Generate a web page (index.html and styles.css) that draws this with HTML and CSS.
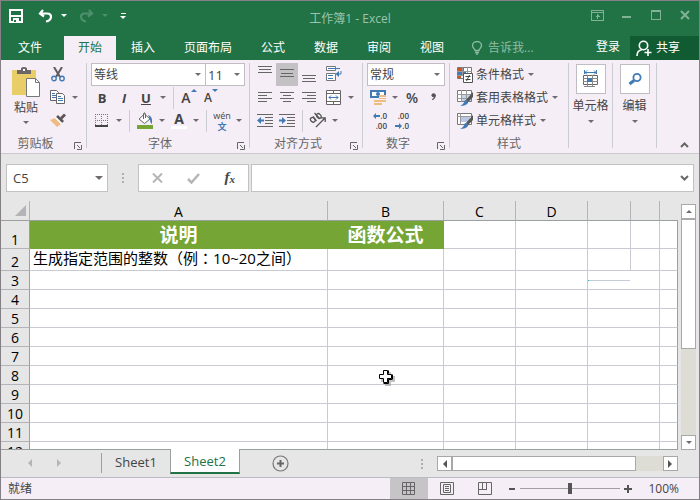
FILE: index.html
```html
<!DOCTYPE html>
<html lang="zh-CN">
<head>
  <meta charset="UTF-8" />
  <meta name="viewport" content="width=device-width, initial-scale=1.0"/>
  <title>工作簿1 - Excel</title>
  <link rel="stylesheet" href="styles.css">
</head>
<body>
<div class="window">

  <header class="titlebar">
    <div class="quick">
      <button class="quick-btn" aria-label="保存"><svg width="14" height="14" viewBox="0 0 14 14" shape-rendering="crispEdges"><path d="M1 1h12v12H1zM2 7h10" fill="none" stroke="#fff" stroke-width="2"/><path d="M4 9h6v4H4z" fill="#fff"/><path d="M5 11h2v2H5z" fill="#217346"/></svg></button>
      <button class="quick-btn" aria-label="撤消"><svg width="15" height="14" viewBox="0 0 15 14"><path d="M5 1L2 4.500l4 3M2 4.500h7c6 0 5 7-1 8" fill="none" stroke="#fff" stroke-width="2.200"/></svg></button>
      <button class="quick-drop" aria-label="撤消列表"><i class="caret"></i></button>
      <button class="quick-btn faded" aria-label="恢复"><svg width="15" height="14" viewBox="0 0 15 14"><path d="M10 1l3 3.500-4 3M13 4.500H6c-6 0-5 7 1 8" fill="none" stroke="#fff" stroke-width="2.200"/></svg></button>
      <button class="quick-drop faded" aria-label="恢复列表"><i class="caret"></i></button>
      <button class="quick-drop more" aria-label="自定义"><i class="caret"></i></button>
    </div>
    <h1>工作簿1 - Excel</h1>
    <div class="controls">
      <button aria-label="功能区显示选项"><svg width="13" height="11" viewBox="0 0 13 11" shape-rendering="crispEdges"><path d="M.5.5h12v10H.5zM1 2.500h11M6.500 4v5M4.500 6.500h4M5.500 5.500h2" fill="none" stroke="currentColor"/></svg></button>
      <button aria-label="最小化"><svg width="10" height="10"><path d="M0 6h9v2H0z" fill="currentColor"/></svg></button>
      <button aria-label="最大化"><svg width="10" height="10" shape-rendering="crispEdges"><path d="M.5.5h9v9h-9zM0 1.500h10" fill="none" stroke="currentColor"/></svg></button>
      <button aria-label="关闭"><svg width="10" height="10"><path d="M1 1l8 8M9 1L1 9" stroke="currentColor" stroke-width="2"/></svg></button>
    </div>
  </header>

  <nav class="tabs">
    <button class="tab file">文件</button>
    <button class="tab active">开始</button>
    <button class="tab">插入</button>
    <button class="tab">页面布局</button>
    <button class="tab">公式</button>
    <button class="tab">数据</button>
    <button class="tab">审阅</button>
    <button class="tab">视图</button>
    <button class="tab tell"><svg width="12" height="14" viewBox="0 0 12 14"><path d="M4 9.500C4 8 1.500 7 1.500 4.500a4.500 4 0 0 1 9 0C10.500 7 8 8 8 9.500zM4 11.500h4M5 13.200h2" fill="none" stroke="currentColor" stroke-width="1.300"/></svg>告诉我...</button>
    <a class="login" href="#">登录</a>
    <button class="share"><svg width="16" height="17" viewBox="0 0 16 17"><circle cx="7.500" cy="5.500" r="4.200" fill="none" stroke="#fff" stroke-width="1.600"/><path d="M1 16c0-4 2-6 5-6.300M8.500 12.500h7M12 9v7" fill="none" stroke="#fff" stroke-width="1.600"/></svg>共享</button>
  </nav>

  <section class="ribbon">
    <div class="group clipboard">
      <div class="body side">
        <button class="paste">
          <svg width="28" height="31" viewBox="0 0 28 31"><path d="M0 3h24v25H0z" fill="#e8cd68"/><path d="M5 7V3h4V1q3-2 6 0v2h4v4z" fill="#6c6668"/><path d="M11 2h2v2h-2z" fill="#fff"/><path d="M14.500 11.500h9l4 4v14h-13z" fill="#fff" stroke="#777"/><path d="M23.500 11.500v4h4" fill="none" stroke="#777"/></svg>
          <span>粘贴</span>
          <i class="caret"></i>
        </button>
        <div>
          <div class="row"><button class="tool" aria-label="剪切"><svg width="14" height="15" viewBox="0 0 14 15"><path d="M3 0l6 10M11 0L5 10" stroke="#5f5a5e" stroke-width="2"/><circle cx="3" cy="11.500" r="2.200" fill="none" stroke="#3f7ab5" stroke-width="1.400"/><circle cx="11" cy="11.500" r="2.200" fill="none" stroke="#3f7ab5" stroke-width="1.400"/></svg></button></div>
          <div class="row"><button class="tool" aria-label="复制"><svg width="16" height="15"><path d="M.5.5h6l2 2v8h-8z" fill="#fff" stroke="#666"/><path d="M2 3.500h3M2 5.500h4M2 7.500h4" stroke="#3f7ab5"/><path d="M6.500 3.500h6l2 2v8h-8z" fill="#fff" stroke="#666"/><path d="M8 6.500h3M8 8.500h5M8 10.500h5" stroke="#3f7ab5"/></svg></button><button class="drop" aria-label="复制选项"><i class="caret"></i></button></div>
          <div class="row"><button class="tool" aria-label="格式刷"><svg width="16" height="15"><path d="M5 5l6 6-4 3L0 7z" fill="#eebc82"/><path d="M6 4l2-2 6 6-2 2z" fill="#5c5659"/><path d="M5 5l1-1 6 6-1 1z" fill="#fff"/><path d="M10 4.500l4-4 2 2-4 4z" fill="#5c5659"/></svg></button></div>
        </div>
      </div>
      <div class="label"><span>剪贴板</span><button class="launch" aria-label="剪贴板设置"><svg width="8" height="8"><path d="M.5 7V.5H7M3 3l3 3M7.500 3v4.500H3" fill="none" stroke="#666"/></svg></button></div>
    </div>

    <div class="group font">
      <div class="body">
        <div class="row combos">
          <label class="combo wide"><select aria-label="字体"><option>等线</option></select></label>
          <label class="combo size"><select aria-label="字号"><option>11</option></select></label>
        </div>
        <div class="row">
          <button class="tool bold">B</button>
          <button class="tool italic">I</button>
          <button class="tool underline">U</button>
          <button class="drop" aria-label="下划线选项"><i class="caret"></i></button>
          <i class="sep"></i>
          <button class="tool grow" aria-label="增大字号"><span>A</span><svg width="6" height="3"><path d="M0 3l3-3 3 3z" fill="#3f7ab5"/></svg></button>
          <button class="tool shrink" aria-label="减小字号"><span>A</span><svg width="6" height="3"><path d="M0 0h6L3 3z" fill="#3f7ab5"/></svg></button>
        </div>
        <div class="row">
          <button class="tool" aria-label="边框"><svg width="14" height="13" shape-rendering="crispEdges"><path d="M.5 0v12M6.500 0v12M12.500 0v12M0 .5h13M0 6.500h13" stroke="#777" stroke-dasharray="1 1"/><path d="M0 12h13" stroke="#444" stroke-width="2"/></svg></button>
          <button class="drop" aria-label="边框选项"><i class="caret"></i></button>
          <i class="sep"></i>
          <button class="tool" aria-label="填充颜色"><svg width="16" height="17"><path d="M2 7l5.500-5L13 7l-5.500 4.500z" fill="#fff" stroke="#666"/><path d="M6.500 7V1.500q1.500-2 2 1V6" fill="none" stroke="#666"/><path d="M11 3q5 1 4 9-2-1-2-5z" fill="#3f7ab5"/><path d="M0 13h16v4H0z" fill="#74a535"/></svg></button>
          <button class="drop" aria-label="填充选项"><i class="caret"></i></button>
          <button class="tool color">A</button>
          <button class="drop" aria-label="字体颜色选项"><i class="caret"></i></button>
          <i class="sep"></i>
          <button class="tool pinyin"><span>wén</span><b>文</b></button>
          <button class="drop" aria-label="拼音选项"><i class="caret"></i></button>
        </div>
      </div>
      <div class="label"><span>字体</span><button class="launch" aria-label="字体设置"><svg width="8" height="8"><path d="M.5 7V.5H7M3 3l3 3M7.500 3v4.500H3" fill="none" stroke="#666"/></svg></button></div>
    </div>

    <div class="group align">
      <div class="body">
        <div class="row">
          <button class="tool" aria-label="顶端对齐"><svg width="14" height="17"><path d="M0 .5h14M1 3.500h12M0 6.500h14" stroke="#666"/></svg></button>
          <button class="tool on" aria-label="垂直居中"><svg width="14" height="17"><path d="M0 3.500h14M1 7.500h12M0 10.500h14" stroke="#666"/></svg></button>
          <button class="tool" aria-label="底端对齐"><svg width="14" height="17"><path d="M0 9.500h14M1 12.500h12M0 15.500h14" stroke="#666"/></svg></button>
          <button class="tool wrap" aria-label="自动换行"><svg width="16" height="17"><path d="M.5.500h9v4h-9zM.500 7.500h9v7h-9z" fill="#fff" stroke="#777"/><path d="M2 2.500h12M2 9.500h5M2 12.500h5M15 5v3h-4" stroke="#3f7ab5" fill="none"/><path d="M13 5L9.500 8l3.500 3z" fill="#3f7ab5"/></svg></button>
        </div>
        <div class="row">
          <button class="tool" aria-label="左对齐"><svg width="14" height="11"><path d="M0 .5h14M0 3.500h9M0 6.500h14M0 9.500h9" stroke="#666"/></svg></button>
          <button class="tool" aria-label="居中"><svg width="14" height="11"><path d="M0 .5h14M3 3.500h8M0 6.500h14M3 9.500h8" stroke="#666"/></svg></button>
          <button class="tool" aria-label="右对齐"><svg width="14" height="11"><path d="M0 .5h14M5 3.500h9M0 6.500h14M5 9.500h9" stroke="#666"/></svg></button>
          <button class="tool wrap" aria-label="合并后居中"><svg width="16" height="15"><path d="M.5.500h14v14H.500z" fill="#fff" stroke="#666"/><path d="M0 3.500h15M0 11.500h15M7.500 0v4M7.500 11v4" stroke="#666"/><path d="M3 7.500h9M5 5.500l-2 2 2 2M10 5.500l2 2-2 2" stroke="#3f7ab5" fill="none"/></svg></button>
          <button class="drop" aria-label="合并选项"><i class="caret"></i></button>
        </div>
        <div class="row">
          <button class="tool" aria-label="减少缩进"><svg width="16" height="13"><path d="M0 .5h16M8 3.500h8M8 6.500h8M8 9.500h8M0 12.500h16" stroke="#666"/><path d="M0 6.500L4 3v2.500h3v2H4V10z" fill="#3f7ab5"/></svg></button>
          <button class="tool" aria-label="增加缩进"><svg width="16" height="13"><path d="M0 .5h16M8 3.500h8M8 6.500h8M8 9.500h8M0 12.500h16" stroke="#666"/><path d="M7 6.500L3 3v2.500H0v2h3V10z" fill="#3f7ab5"/></svg></button>
          <i class="sep"></i>
          <button class="tool" aria-label="方向"><svg width="18" height="17"><g fill="none" stroke="#555" stroke-width="1.300"><ellipse cx="3.800" cy="7.800" rx="2" ry="2.600" transform="rotate(-45 3.800 7.800)"/><path d="M4 4.500L7.500 9M5.500 1l5 5.500"/><ellipse cx="9.800" cy="4" rx="2" ry="2.600" transform="rotate(-45 9.800 4)"/><path d="M7 15l9-9M12 5.800h4.200V10"/></g></svg></button>
          <button class="drop" aria-label="方向选项"><i class="caret"></i></button>
        </div>
      </div>
      <div class="label"><span>对齐方式</span><button class="launch" aria-label="对齐设置"><svg width="8" height="8"><path d="M.5 7V.5H7M3 3l3 3M7.500 3v4.500H3" fill="none" stroke="#666"/></svg></button></div>
    </div>

    <div class="group number">
      <div class="body">
        <div class="row combos">
          <label class="combo"><select aria-label="数字格式"><option>常规</option></select></label>
        </div>
        <div class="row">
          <button class="tool" aria-label="会计数字格式"><svg width="16" height="17"><path d="M1 2h14v6H1z" fill="#fff" stroke="#3f7ab5" stroke-width="2"/><circle cx="8" cy="5" r="2" fill="#3f7ab5"/><path d="M9 6h7v7h-4v3H4v-5h5z" fill="#f0bd80"/><path d="M9 8.500h7M9 10.500h7M4 13.500h8" stroke="#f5eef6"/></svg></button>
          <button class="drop" aria-label="货币选项"><i class="caret"></i></button>
          <button class="tool percent">%</button>
          <button class="tool comma" aria-label="千位分隔"><svg width="6" height="9" viewBox="0 0 6 10"><circle cx="2.500" cy="2.500" r="2.300" fill="#555"/><path d="M4 2q1 3-3 5.500" fill="none" stroke="#555" stroke-width="1.500"/></svg></button>
        </div>
        <div class="row">
          <button class="tool decimal" aria-label="增加小数位数"><span><svg width="7" height="6"><path d="M0 3l3-3v2h4v2H3v2z" fill="#3f7ab5"/></svg>.0</span><span>.00</span></button>
          <button class="tool decimal" aria-label="减少小数位数"><span>.00</span><span><svg width="7" height="6"><path d="M7 3L4 0v2H0v2h4v2z" fill="#3f7ab5"/></svg>.0</span></button>
        </div>
      </div>
      <div class="label"><span>数字</span><button class="launch" aria-label="数字设置"><svg width="8" height="8"><path d="M.5 7V.5H7M3 3l3 3M7.500 3v4.500H3" fill="none" stroke="#666"/></svg></button></div>
    </div>

    <div class="group styles">
      <div class="body">
        <div class="row"><button class="text-tool"><svg width="16" height="16"><path d="M.5.500h14v11H.500z" fill="#fff" stroke="#777"/><path d="M1 1h6v3H1zM1 8h3v3H1z" fill="#d15427"/><path d="M1 4h8v4H1z" fill="#3f7ab5"/><path d="M0 4.500h15M0 8.500h7M5.500 0v8M10.500 0v6" stroke="#999"/><path d="M6.500 6.500h9v9h-9z" fill="#fff" stroke="#555"/><path d="M8.500 9.500h5M8.500 12.500h5M12.500 8l-3 6" stroke="#444"/></svg>条件格式<i class="caret"></i></button></div>
        <div class="row"><button class="text-tool"><svg width="16" height="16"><path d="M.5.500h14v11H.500z" fill="#fff" stroke="#777"/><path d="M5 4h9v7H5z" fill="#c7d3e8"/><path d="M0 4.500h14M0 8.500h14M4.500 0v12M9.500 0v12" stroke="#999"/><path d="M16 2v5l-5 5-2-2z" fill="#555"/><path d="M8 10q4 0 3 3-2 3-8 3 4-2 5-6z" fill="#3f7ab5"/></svg>套用表格格式<i class="caret"></i></button></div>
        <div class="row"><button class="text-tool"><svg width="16" height="16"><path d="M.5.500h14v11H.500z" fill="#fff" stroke="#777"/><path d="M4 4h9v5H4z" fill="#b9c8e4"/><path d="M0 3.500h14M3.500 0v12" stroke="#999"/><path d="M16 2v5l-5 5-2-2z" fill="#555"/><path d="M8 10q4 0 3 3-2 3-8 3 4-2 5-6z" fill="#3f7ab5"/></svg>单元格样式<i class="caret"></i></button></div>
      </div>
      <div class="label"><span>样式</span></div>
    </div>

    <div class="group big">
      <button class="big-tool">
        <span class="tile"><svg width="16" height="18"><path d="M1.500 0v4M13.500 0v4M2 2.500h11M4 .5l-2 2 2 2M11 .5l2 2-2 2" fill="none" stroke="#3f7ab5"/><path d="M.5 5.500h14v9H.500z" fill="#fff" stroke="#666"/><path d="M0 8.500h15M0 11.500h15M4.500 5v11M9.500 5v11M1 16.500h11" stroke="#888"/><path d="M4 8h5v4H4z" fill="#3f7ab5"/></svg></span>
        <span>单元格</span>
        <i class="caret"></i>
      </button>
    </div>
    <div class="group big">
      <button class="big-tool">
        <span class="tile"><svg width="14" height="13"><circle cx="9" cy="4.500" r="3.600" fill="#fff" stroke="#3f7ab5" stroke-width="1.800"/><path d="M6 7.500L1.500 11" stroke="#3f7ab5" stroke-width="3"/></svg></span>
        <span>编辑</span>
        <i class="caret"></i>
      </button>
    </div>
    <button class="collapse" aria-label="折叠功能区"><svg width="9" height="6"><path d="M1 5l3.500-3.500L8 5" fill="none" stroke="#666" stroke-width="2"/></svg></button>
  </section>

  <div class="formula-bar">
    <div class="name-box">
      <input type="text" value="C5" aria-label="名称框">
      <button aria-label="名称列表"><i class="caret large"></i></button>
    </div>
    <i class="dots"></i>
    <div class="formula-tools">
      <button aria-label="取消"><svg width="11" height="10"><path d="M1 .5l9 9M10 .5l-9 9" stroke="#b5b5b5" stroke-width="2"/></svg></button>
      <button aria-label="输入"><svg width="13" height="11"><path d="M1 6l3.500 3.500L12 1" fill="none" stroke="#b5b5b5" stroke-width="2.500"/></svg></button>
      <button class="fx" aria-label="插入函数">f<sub>x</sub></button>
    </div>
    <div class="formula-input">
      <input type="text" aria-label="编辑栏">
      <button aria-label="展开编辑栏"><svg width="9" height="6"><path d="M1 1l3.500 3.500L8 1" fill="none" stroke="#666" stroke-width="2"/></svg></button>
    </div>
  </div>

  <main class="workarea">
    <div class="grid">
      <table>
        <colgroup>
          <col class="c-num"><col class="c-a"><col class="c-b"><col class="c-mid"><col class="c-mid"><col class="c-e"><col class="c-f"><col>
        </colgroup>
        <thead>
          <tr><th class="corner"><svg width="11" height="11"><path d="M11 0v11H0z" fill="#b3b3b8"/></svg></th><th>A</th><th>B</th><th>C</th><th>D</th><th></th><th></th><th></th></tr>
        </thead>
        <tbody>
          <tr class="head-row"><th>1</th><td class="title">说明</td><td class="title">函数公式</td><td></td><td></td><td></td><td></td><td></td></tr>
          <tr class="text-row"><th>2</th><td>生成指定范围的整数<span lang="zh-TW">（</span>例<span lang="zh-TW">：</span>10~20之间<span lang="zh-TW">）</span></td><td></td><td></td><td></td><td></td><td></td><td></td></tr>
          <tr><th>3</th><td></td><td></td><td></td><td></td><td colspan="2"><i class="stroke"></i></td><td></td></tr>
          <tr><th>4</th><td></td><td></td><td></td><td></td><td colspan="2"></td><td></td></tr>
          <tr><th>5</th><td></td><td></td><td></td><td></td><td colspan="2"></td><td></td></tr>
          <tr><th>6</th><td></td><td></td><td></td><td></td><td colspan="2"></td><td></td></tr>
          <tr><th>7</th><td></td><td></td><td></td><td></td><td colspan="2"></td><td></td></tr>
          <tr><th>8</th><td></td><td></td><td></td><td></td><td colspan="2"></td><td></td></tr>
          <tr><th>9</th><td></td><td></td><td></td><td></td><td colspan="2"></td><td></td></tr>
          <tr><th>10</th><td></td><td></td><td></td><td></td><td colspan="2"></td><td></td></tr>
          <tr><th>11</th><td></td><td></td><td></td><td></td><td colspan="2"></td><td></td></tr>
          <tr><th>12</th><td></td><td></td><td></td><td></td><td colspan="2"></td><td></td></tr>
        </tbody>
      </table>
      <svg class="cursor" width="20" height="20" viewBox="0 0 20 20"><path d="M7 3h6v4h4v6h-4v4H7v-4H3V7h4z" fill="#999" opacity=".6"/><path d="M5.500 1.500h4v4h4v4h-4v4h-4v-4h-4v-4h4z" fill="#fff" stroke="#000"/><path d="M10.500 1.500v3M14.500 5.500v5M14 10.500h-3.500V14.500h-5" fill="none" stroke="#000"/></svg>
    </div>
    <div class="vscroll">
      <button aria-label="向上滚动"><i class="caret flip"></i></button>
      <div class="thumb"></div>
      <button class="end" aria-label="向下滚动"><i class="caret"></i></button>
    </div>
  </main>

  <div class="sheets">
    <div class="sheet-nav">
      <button aria-label="上一个"><svg width="4" height="8"><path d="M4 0v8L0 4z" fill="#b5b5b5"/></svg></button>
      <button aria-label="下一个"><svg width="4" height="8"><path d="M0 0v8l4-4z" fill="#b5b5b5"/></svg></button>
    </div>
    <button class="sheet">Sheet1</button>
    <button class="sheet current">Sheet2</button>
    <button class="add" aria-label="新工作表"><svg width="17" height="17"><circle cx="8.500" cy="8.500" r="7.500" fill="none" stroke="#777" stroke-width="1.200"/><path d="M8.500 5v7M5 8.500h7" stroke="#666" stroke-width="2"/></svg></button>
    <i class="dots"></i>
    <div class="hscroll">
      <button aria-label="向左滚动"><svg width="5" height="8"><path d="M5 0v8L1 4z" fill="#555"/></svg></button>
      <div class="thumb"></div>
      <button class="end" aria-label="向右滚动"><svg width="5" height="8"><path d="M0 0v8l4-4z" fill="#555"/></svg></button>
    </div>
  </div>

  <footer class="status">
    <span class="ready">就绪</span>
    <button class="view on" aria-label="普通"><svg width="14" height="13"><path d="M.5.500h12v12H.500zM4.500 0v13M8.500 0v13M0 4.500h13M0 8.500h13" fill="none" stroke="#666"/></svg></button>
    <button class="view" aria-label="页面布局"><svg width="14" height="13"><path d="M.5.500h13v12H.500zM3.500 2.500h7v8h-7zM5 4.500h4M5 6.500h4M5 8.500h4" fill="none" stroke="#666"/></svg></button>
    <button class="view" aria-label="分页预览"><svg width="14" height="13"><path d="M.5.500h13v12H.500zM0 7.500h9M4.500 0v8M8.500 0v8" fill="none" stroke="#666"/></svg></button>
    <button class="zoom-btn" aria-label="缩小"><svg width="8" height="8"><path d="M1 3h6v2H1z" fill="#555"/></svg></button>
    <input class="zoom" type="range" min="0" max="100" value="50" aria-label="缩放">
    <button class="zoom-btn" aria-label="放大"><svg width="8" height="8"><path d="M0 3h8v2H0zM3 0h2v8H3z" fill="#555"/></svg></button>
    <span class="percent-value">100%</span>
  </footer>

</div>
</body>
</html>
```
FILE: styles.css
```css
* {
  box-sizing: border-box;
}

body {
  margin: 0;
  font-family: "Open Sans", "Noto Sans CJK SC", sans-serif;
  font-size: 12px;
  line-height: 16px;
  color: #444;
}

button, input, select {
  font: inherit;
  color: inherit;
  margin: 0;
  padding: 0;
  border: none;
  background: none;
}

svg {
  display: block;
  flex: none;
}

.window {
  height: 100vh;
  display: flex;
  flex-direction: column;
  border: 1px solid #858085;
  background-color: #e6e6e6;
}

.caret {
  display: block;
  flex: none;
  border: 3px solid transparent;
  border-top-color: currentColor;
  border-bottom: none;
  width: 0;
  color: #706a70;
}

.caret.large {
  border-width: 4px 4px 0;
}

.caret.flip {
  transform: rotate(180deg);
}

/* title bar */
.titlebar {
  height: 35px;
  flex: none;
  display: grid;
  grid-template-columns: 1fr auto 1fr;
  align-items: center;
  background-color: #217346;
}

.titlebar h1 {
  margin: 0;
  font-size: 12px;
  font-weight: normal;
  color: #9cc4ad;
}

.quick {
  display: flex;
  align-items: center;
  padding: 0 0 6px 4px;
}

.quick-btn {
  display: flex;
  justify-content: center;
  width: 22px;
}

.quick-drop {
  display: flex;
  justify-content: center;
  width: 16px;
}

.quick .caret {
  color: #fff;
}

.quick-btn + .quick-btn {
  margin-left: 7px;
}

.quick-drop + .quick-btn {
  margin-left: 3px;
}

.faded {
  opacity: 0.2;
}

.quick-drop.more {
  margin-left: 2px;
  flex-direction: column;
  align-items: center;
}

.more::before {
  content: "";
  width: 5px;
  height: 1px;
  margin-bottom: 2px;
  background-color: #fff;
}

.controls {
  display: flex;
  justify-content: flex-end;
  padding-bottom: 6px;
  color: #82b296;
}

.controls button {
  display: flex;
  justify-content: center;
  width: 29px;
}

/* ribbon tabs */
.tabs {
  display: flex;
  flex: none;
  gap: 1px;
  height: 24px;
  background-color: #217346;
  color: #fff;
}

.tab {
  padding: 0 14px;
}

.tab.file {
  width: 62px;
  padding: 0 4px 0 0;
}

.tab.active {
  background-color: #f5eef6;
  color: #217346;
}

.tab.tell {
  display: flex;
  align-items: center;
  gap: 5px;
  padding: 0 12px;
  color: #90bca2;
}

.login {
  margin-left: auto;
  padding: 3px 9px;
  color: #fff;
  text-decoration: none;
}

.share {
  display: flex;
  align-items: center;
  gap: 4px;
  width: 69px;
  padding-left: 6px;
  background-color: #115b32;
}

/* ribbon */
.ribbon {
  display: flex;
  flex: none;
  height: 94px;
  padding-top: 3px;
  background-color: #f5eef6;
  border-bottom: 1px solid #cbc8d0;
}

.group {
  flex: none;
  display: flex;
  flex-direction: column;
  padding-right: 1px;
  background: linear-gradient(#cccdd3, #cccdd3) right top / 1px 85px no-repeat;
}

.clipboard { width: 86px; }
.font { width: 163px; }
.align { width: 113px; }
.number { width: 87px; }
.styles { width: 119px; }

.body {
  padding: 0 4px;
}

.side {
  display: flex;
}

.row {
  display: flex;
  align-items: center;
  height: 23px;
}

.tool {
  display: flex;
  align-items: center;
  justify-content: center;
  flex: none;
  width: 22px;
  height: 23px;
}

.tool.on {
  background-color: #c3c1c4;
}

.tool.wrap {
  margin-left: 3px;
}

.drop {
  display: flex;
  align-items: center;
  justify-content: center;
  flex: none;
  width: 12px;
  height: 20px;
}

.sep {
  width: 1px;
  height: 22px;
  margin: 0 4px;
  flex: none;
  background-color: #cccdd3;
}

.paste {
  width: 42px;
  padding-top: 4px;
  display: flex;
  flex-direction: column;
  align-items: center;
}

.paste span {
  margin: 2px 0 5px;
}

.label {
  display: flex;
  align-items: center;
  height: 21px;
  padding-top: 2px;
  color: #666;
}

.label span {
  flex: 1;
  text-align: center;
}

.launch {
  display: flex;
  justify-content: center;
  width: 16px;
  padding-top: 4px;
}

.combo {
  position: relative;
  flex: 1;
  height: 23px;
}

.combo.size {
  flex: none;
  width: 40px;
  margin-left: -1px;
}

.combo select {
  appearance: none;
  display: block;
  width: 100%;
  height: 23px;
  padding-left: 2px;
  background-color: #fff;
  border: 1px solid #c0bec2;
  border-radius: 0;
}

.combo.size select {
  font-size: 13px;
}

.combo::after {
  content: "";
  position: absolute;
  right: 5px;
  top: 10px;
  border: 3px solid transparent;
  border-top-color: #706a70;
  border-bottom: none;
}

.bold, .italic, .underline {
  font-weight: bold;
  font-size: 13px;
}

.italic { font-style: italic; }
.underline { text-decoration: underline; }

.grow, .shrink {
  align-items: flex-start;
  padding-top: 3px;
  font-weight: 600;
  font-size: 14px;
}

.shrink {
  font-size: 12px;
}

.grow span, .shrink span {
  padding-top: 1px;
}

.color {
  font-size: 14px;
  font-weight: bold;
  height: 17px;
  border-bottom: 3px solid #fff;
  width: 16px;
  margin: 0 3px;
}

.pinyin {
  flex-direction: column;
  font-size: 9px;
  line-height: 11px;
}

.pinyin b {
  color: #3f7ab5;
}

.percent {
  font-size: 14px;
  font-weight: 600;
}

.decimal {
  flex-direction: column;
  align-items: flex-end;
  padding-right: 2px;
  font-size: 8px;
  font-weight: 600;
  line-height: 10px;
}

.decimal span {
  display: flex;
  align-items: center;
}

.text-tool {
  display: flex;
  align-items: center;
  gap: 4px;
  padding-left: 3px;
  white-space: nowrap;
}

.text-tool svg {
  margin-right: -1px;
}

.group.big {
  width: 44px;
}

.big-tool {
  display: flex;
  flex-direction: column;
  align-items: center;
  padding-top: 1px;
}

.tile {
  display: flex;
  align-items: center;
  justify-content: center;
  width: 30px;
  height: 30px;
  margin-bottom: 4px;
  background-color: #fff;
  border: 1px solid #c0bec2;
}

.big-tool .caret {
  margin-top: 6px;
}

.collapse {
  align-self: flex-end;
  margin-left: auto;
  padding: 0 10px 5px;
}

/* formula bar */
.formula-bar {
  display: flex;
  flex: none;
  height: 47px;
  padding: 10px 5px 9px;
}

.name-box, .formula-tools, .formula-input {
  display: flex;
  align-items: center;
  background-color: #fff;
  border: 1px solid #c2c2c2;
}

.name-box {
  width: 102px;
  font-size: 13px;
}

.name-box input, .formula-input input {
  flex: 1;
  min-width: 0;
  padding-left: 6px;
}

.name-box button, .formula-input button {
  padding: 6px 4px;
}

.dots {
  width: 2px;
  height: 10px;
  margin: 9px 14px;
  flex: none;
  background: repeating-linear-gradient(#b0b0b4 0 2px, transparent 2px 4px);
}

.formula-tools {
  width: 111px;
  margin-right: 2px;
}

.formula-tools button {
  flex: 1;
  display: flex;
  justify-content: center;
}

.formula-tools .fx {
  display: block;
  font-family: "Liberation Serif", serif;
  font-style: italic;
  font-weight: bold;
  font-size: 15px;
}

.fx sub {
  font-size: 11px;
  vertical-align: -1px;
}

.formula-input {
  flex: 1;
}

/* cells */
.workarea {
  flex: 1;
  min-height: 0;
  display: flex;
}

.grid {
  position: relative;
  flex: 1;
  min-width: 0;
  overflow: hidden;
  border-bottom: 1px solid #9a9fa0;
}

.grid table {
  width: 100%;
  table-layout: fixed;
  border-collapse: separate;
  border-spacing: 0;
  color: #000;
}

.c-num { width: 29px; }
.c-a { width: 298px; }
.c-b { width: 116px; }
.c-mid { width: 72px; }
.c-e { width: 43px; }
.c-f { width: 29px; }

.grid th, .grid td {
  height: 19px;
  padding: 0;
  border-right: 1px solid #cacad2;
  border-bottom: 1px solid #cacad2;
  font-size: 15px;
  line-height: 18px;
  font-weight: normal;
  overflow: hidden;
  white-space: nowrap;
}

.grid td {
  background-color: #fff;
  text-align: left;
}

.grid td:last-child {
  border-right-color: #9a9fa0;
}

.grid th {
  font-size: 14px;
  line-height: 16px;
  background-color: #e6e6e6;
  vertical-align: bottom;
}

.grid tbody th {
  border-right-color: #9a9fa0;
  border-bottom-color: #b4b4b8;
}

.grid thead th {
  height: 20px;
  border-right-color: #b4b4b8;
  border-bottom-color: #9a9fa0;
}

.grid thead th:last-child {
  border-right: none;
}

.corner svg {
  margin: 0 3px 4px auto;
}

.grid .head-row td {
  height: 28px;
}

.grid .text-row td {
  height: 22px;
  padding-left: 3px;
  vertical-align: top;
}

.text-row span {
  font-family: "Noto Sans CJK TC", sans-serif;
}

.grid .head-row .title {
  background-color: #74a535;
  border-color: #74a535;
  color: #fff;
  font-size: 19px;
  font-weight: bold;
  line-height: 26px;
  text-align: center;
}

.stroke {
  display: block;
  width: 42px;
  height: 1px;
  background-color: #c5ccd8;
  border-left: 1px solid #2fb4cf;
}

.cursor {
  position: absolute;
  left: 377px;
  top: 168px;
}

.vscroll {
  display: flex;
  flex-direction: column;
  width: 15px;
  margin: 3px 3px 0;
  background-color: #dddcd5;
}

.vscroll button, .hscroll button {
  display: flex;
  align-items: center;
  justify-content: center;
  flex: none;
  width: 15px;
  height: 15px;
  background-color: #fff;
  border: 1px solid #a8a8a8;
}

.thumb {
  background-color: #fff;
  border: 1px solid #a8a8a8;
}

.vscroll .thumb {
  flex: 0 1 53%;
}

.end {
  margin-top: auto;
}

/* sheet tabs */
.sheets {
  display: flex;
  flex: none;
  height: 27px;
}

.sheet-nav {
  display: flex;
  justify-content: center;
  gap: 25px;
  width: 101px;
  height: 20px;
  margin-top: 3px;
  padding-right: 14px;
  border-right: 1px solid #9a9fa0;
}

.sheet {
  width: 68px;
  height: 24px;
  font-size: 13px;
}

.sheet.current {
  width: 70px;
  margin-top: -1px;
  height: 25px;
  position: relative;
  background-color: #fff;
  color: #217346;
  border: 1px solid #9a9fa0;
  border-top: none;
  border-bottom: 2px solid #217346;
}

.add {
  margin: 0 auto 0 32px;
}

.hscroll {
  display: flex;
  width: 241px;
  height: 15px;
  margin: 6px 21px 0 0;
  background-color: #dddcd5;
}

.hscroll .thumb {
  flex: 0 1 184px;
}

.hscroll .end {
  margin: 0 0 0 auto;
}

/* status bar */
.status {
  display: flex;
  align-items: center;
  flex: none;
  height: 22px;
  background-color: #f5eef6;
  border-top: 1px solid #b9bcc0;
}

.ready {
  margin: 0 auto 0 7px;
}

.view {
  display: flex;
  align-items: center;
  justify-content: center;
  width: 38px;
  height: 21px;
}

.view.on {
  background-color: #c6c4c7;
}

.zoom-btn {
  padding: 0 4px;
}

.zoom {
  appearance: none;
  width: 100px;
  height: 11px;
  background: linear-gradient(#a39ea3, #a39ea3) center / 100% 1px no-repeat;
}

.zoom::-webkit-slider-thumb {
  appearance: none;
  width: 4px;
  height: 11px;
  background-color: #555;
}

.percent-value {
  width: 43px;
  margin: 0 20px 0 4px;
  text-align: right;
}

.zoom-btn + .percent-value {
  margin-left: 0;
}
```
